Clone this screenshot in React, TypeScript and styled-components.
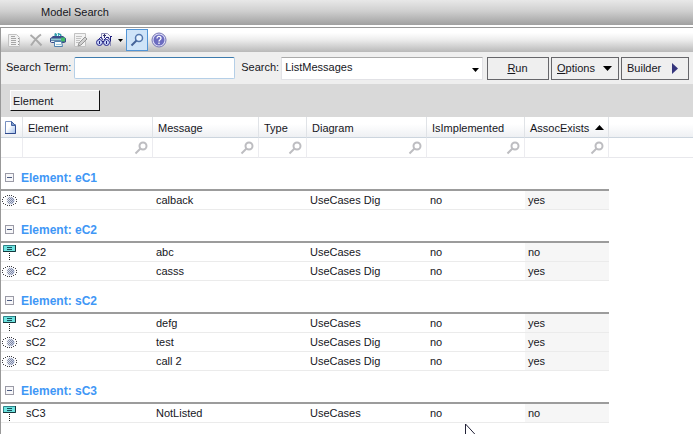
import React from "react";
import styled, { createGlobalStyle, css } from "styled-components";

const GlobalStyle = createGlobalStyle`
  *, *::before, *::after { box-sizing: border-box; }
  body { margin: 0; background: #fff; }
  button, input, select { font: inherit; color: inherit; margin: 0; border-radius: 0; }
`;

const Page = styled.div`
  position: relative;
  display: flex;
  flex-direction: column;
  min-height: 100vh;
  overflow: hidden;
  color: #16161c;
  font: 11px/16px "Liberation Sans", Arial, sans-serif;
`;

const TitleBar = styled.header`
  height: 25px;
  padding: 4px 0 0 41px;
  background: linear-gradient(#e8e8e8, #cfcfcf 45%, #a0a0a0);
`;

const Title = styled.h1`
  margin: 0;
  font: inherit;
`;

const Panel = styled.main`
  flex: 1;
  margin-top: 2px;
  border-top: 1px solid #989898;
  border-left: 1px solid #999;
`;

const Toolbar = styled.div`
  display: flex;
  align-items: center;
  height: 24px;
  padding-left: 2px;
  background: linear-gradient(#fff 20%, #ececec 50%, #b9b9b9);
`;

const ToolButton = styled.button<{ $active?: boolean; $narrow?: boolean; $spaced?: boolean }>`
  display: grid;
  place-items: center;
  width: ${(p) => (p.$narrow ? "11px" : "22px")};
  height: 22px;
  margin-left: ${(p) => (p.$spaced ? "2px" : "0")};
  padding: 0;
  border: 1px solid ${(p) => (p.$active ? "#5295d6" : "transparent")};
  background: ${(p) => (p.$active ? "#cfe4f8" : "transparent")};
`;

const SearchRow = styled.form`
  display: flex;
  align-items: center;
  height: 32px;
  padding: 0 4px 0 5px;
  background: #efefef;
`;

const FieldLabel = styled.label`
  flex: none;
  padding-bottom: 2px;
`;

const TermInput = styled.input`
  flex: none;
  width: 161px;
  height: 22px;
  margin: 0 6px 0 3px;
  padding: 0 4px;
  border: 1px solid #b5cfe7;
  border-top-color: #3d7bad;
  border-radius: 2px;
  background: #fff;
`;

const SelectWrap = styled.div`
  position: relative;
  flex: 1;
  margin: 0 4px 0 2px;
`;

const SearchSelect = styled.select`
  display: block;
  appearance: none;
  width: 100%;
  height: 23px;
  padding: 0 16px 3px 3px;
  border: 1px solid #e2e2e6;
  border-top-color: #aaa;
  background: #fff;
`;

const SelectArrow = styled.span`
  position: absolute;
  top: 7px;
  right: 4px;
  display: flex;
  pointer-events: none;
`;

const PushButton = styled.button<{ $width: number; $spread?: boolean }>`
  flex: none;
  display: flex;
  align-items: center;
  justify-content: ${(p) => (p.$spread ? "space-between" : "center")};
  width: ${(p) => p.$width}px;
  height: 23px;
  padding: 0 6px 0 5px;
  border: 1px solid #66666a;
  background: #efefef;

  & + & { margin-left: 2px; }
`;

const GroupBand = styled.div`
  display: flex;
  align-items: center;
  height: 33px;
  padding-left: 9px;
  background: #d9d9d9;
`;

const GroupChip = styled.button`
  width: 90px;
  height: 21px;
  padding: 0 0 0 2px;
  border: 1px solid #fff;
  border-right-color: #111;
  border-bottom-color: #111;
  background: #efefef;
  text-align: left;
`;

const Grid = styled.table`
  width: 100%;
  table-layout: fixed;
  border-collapse: separate;
  border-spacing: 0;
`;

const Col = styled.col<{ $width?: number }>`
  width: ${(p) => (p.$width ? `${p.$width}px` : "auto")};
`;

const HeadCell = styled.th`
  height: 21px;
  padding: 1px 0 0 5px;
  border-right: 1px solid #e0e3e7;
  border-bottom: 1px solid #ccd5de;
  background: linear-gradient(#fff 35%, #eef0f3);
  font-weight: normal;
  text-align: left;
  white-space: nowrap;

  &:first-child { padding-left: 3px; }
  &:last-child { border-right: 0; }
`;

const HeadLabel = styled.span`
  display: flex;
  align-items: center;
  gap: 6px;
`;

const FilterCell = styled.td`
  height: 20px;
  padding: 0 4px 0 0;
  border-right: 1px solid #ececf0;
  border-bottom: 1px solid #e8e8ec;

  &:last-child { border-right: 0; }
`;

const FilterButton = styled.button`
  display: flex;
  margin-left: auto;
  padding: 0;
  border: 0;
  background: none;
`;

const GroupCell = styled.th`
  height: 33px;
  padding: 8px 0 0 4px;
  border-bottom: 2px solid #9c9c9c;
  color: #3f97f6;
  font: bold 12px/16px "Liberation Sans", Arial, sans-serif;
  text-align: left;
`;

const GroupTitle = styled.span`
  display: flex;
  align-items: center;
  gap: 7px;
`;

const Toggle = styled.button`
  display: flex;
  padding: 0;
  border: 0;
  background: none;
`;

const cellBase = css`
  height: 19px;
  border-bottom: 1px solid #ebebeb;
`;

const IconCell = styled.td`
  ${cellBase}
  padding: 0 0 0 1px;
`;

const Cell = styled.td<{ $sorted?: boolean }>`
  ${cellBase}
  padding: 0 0 0 3px;
  background: ${(p) => (p.$sorted ? "#f6f6f6" : "#fff")};
  white-space: nowrap;
`;

const Blank = styled.td`
  padding: 0;
`;

const Block = styled.svg`
  display: block;
  flex: none;
`;

const Pointer = styled(Block)`
  position: absolute;
  left: 465px;
  top: 424px;
`;

const Triangle = ({ d, w, h, fill = "#000" }: { d: string; w: number; h: number; fill?: string }) => (
  <Block width={w} height={h} viewBox={`0 0 ${w} ${h}`} aria-hidden="true">
    <path d={d} fill={fill} />
  </Block>
);

const Icon = ({ children }: { children: React.ReactNode }) => (
  <Block width="16" height="16" viewBox="0 0 16 16" fill="none" aria-hidden="true">
    {children}
  </Block>
);

const ListIcon = () => (
  <Icon>
    <path d="M2.500 2.500h8l3 3v9h-11z" fill="#f1f1f1" stroke="#c2c2c2" />
    <path d="M5 4.500h4M5 6.500h5M5 8.500h5M5 10.500h5M5 12.500h5" stroke="#a6a6a6" />
    <path d="M12.500 6v1M12.500 9v1M12.500 12v1" stroke="#8f8f8f" />
  </Icon>
);

const DeleteIcon = () => (
  <Icon>
    <path d="M2.500 3c4 3 7 6 11 10.500M13 2.500C9 5 6 9 3 13.500" stroke="#aaa" strokeWidth="2" />
  </Icon>
);

const PrinterIcon = () => (
  <Icon>
    <path d="M5 5V1.500l2 1 1-1 3 1V5z" fill="#3fb6c4" stroke="#2c96a2" />
    <path d="M7.500 2v3M9.500 3v2" stroke="#e4fbff" />
    <path d="M0 6.500 3 4h10l3 2.500V10l-2 1H2l-2-1z" fill="#3c4c8a" />
    <path d="M1 6.500h11v2H1z" fill="#8fc9d0" />
    <path d="M11 5.500h4v4h-4z" fill="#42bc6a" />
    <path d="M1 9h4v1H1z" fill="#e4ecf2" />
    <path d="M4.500 9.500h7l1 5h-8z" fill="#f4fafc" stroke="#4e80ad" />
    <path d="M6 12.500h5" stroke="#9ac5dc" />
  </Icon>
);

const EditIcon = () => (
  <Icon>
    <path d="M2.500 1.500h11v13h-11z" fill="#f2f2f2" stroke="#c2c2c2" />
    <path d="M4 4.500h6M4 6.500h5M4 8.500h4M4 10.500h3" stroke="#c2c2c2" />
    <path d="m13 5-6 6-1 3 3-1 6-6z" fill="#d0d0d0" stroke="#969696" />
  </Icon>
);

const FindIcon = () => (
  <Icon>
    <path d="M5.500 7V1.500h6l3 3V14" fill="#f2f2fb" stroke="#8f8fb6" />
    <path d="M7 3.500h3M8.500 2v4M11 5.500h2" stroke="#34346e" />
    <path d="m2 8 3-3 2 3M8 8l3-3 3 2.500" stroke="#26268c" />
    <circle cx="3.500" cy="10.500" r="3" fill="#c8d4f8" stroke="#26268a" />
    <circle cx="10.500" cy="10.500" r="3" fill="#c8d4f8" stroke="#26268a" />
    <path d="M6 9.500h2M3.500 9v3M10.500 9v3" stroke="#20207e" />
    <path d="M14 4.500h2M14.500 4.500v5" stroke="#20207e" />
  </Icon>
);

const SearchToolIcon = () => (
  <Icon>
    <circle cx="10" cy="6" r="3.500" fill="#e8f4ff" stroke="#5276ac" strokeWidth="1.500" />
    <path d="m7.500 8.500-5 5" stroke="#456499" strokeWidth="2" />
  </Icon>
);

const HelpIcon = () => (
  <Icon>
    <circle cx="8" cy="8" r="7" fill="#e0e0f8" stroke="#7676b4" />
    <circle cx="8" cy="8" r="5.500" fill="#6c6cc0" />
    <path d="M6 6.500C6 3.500 10 4 10 6.300 10 8 8 7.500 8 9.500M8 10.500v1.500" stroke="#fff" strokeWidth="1.300" />
  </Icon>
);

const PageIcon = () => (
  <Block width="13" height="15" viewBox="0 0 13 15" aria-hidden="true">
    <defs>
      <linearGradient id="sheet" x1="0" y1="0" x2="1" y2="1">
        <stop offset="0.4" stopColor="#fff" />
        <stop offset="1" stopColor="#9dbbe8" />
      </linearGradient>
    </defs>
    <path d="M1.500 1.500h6l4 4v8h-10z" fill="url(#sheet)" stroke="#7890c0" />
    <path d="M11.500 4.500v9H1" fill="none" stroke="#2f4a8e" />
    <path d="M7.500 1.500v4h4z" fill="#7f9ccc" stroke="#4463a2" />
  </Block>
);

const FilterIcon = () => (
  <Block width="14" height="14" viewBox="0 0 14 14" fill="none" aria-hidden="true">
    <circle cx="9" cy="5" r="3.500" stroke="#bdbdc1" strokeWidth="2" />
    <path d="m6.500 7.500-5 5" stroke="#bdbdc1" strokeWidth="2" />
  </Block>
);

const MinusBox = () => (
  <Block width="9" height="9" viewBox="0 0 9 9" aria-hidden="true">
    <rect x=".5" y=".5" width="8" height="8" fill="#f7f7f9" stroke="#9a9aa6" />
    <path d="M2 4.500h5" stroke="#4a5a80" />
  </Block>
);

const ObjectIcon = () => (
  <Block width="15" height="17" viewBox="0 0 15 17" fill="none" aria-label="Sequence element" role="img">
    <path d="M1.500 1.500h12v6h-12z" fill="#6fe3e0" stroke="#2b8489" />
    <path d="M1 7.500h12.500V1" stroke="#16383c" />
    <path d="M5 3.500h5M5 5.500h5" stroke="#164c58" />
    <path d="M7.500 9v7" stroke="#222" strokeDasharray="1 1" />
  </Block>
);

const UseCaseIcon = () => (
  <Block width="15" height="13" viewBox="0 0 15 13" fill="none" aria-label="Use case element" role="img">
    <defs>
      <pattern id="mesh" width="2" height="2" patternUnits="userSpaceOnUse">
        <path d="M0 0h1v1H0zM1 1h1v1H1z" fill="#6d7690" />
      </pattern>
      <linearGradient id="glow">
        <stop offset="0.1" stopColor="#fff" />
        <stop offset="1" stopColor="#b4c0e0" />
      </linearGradient>
    </defs>
    <ellipse cx="7.500" cy="6.500" rx="5" ry="4" fill="url(#glow)" />
    <ellipse cx="8.500" cy="6.500" rx="3.500" ry="3.500" fill="url(#mesh)" opacity=".8" />
    <path
      d="M5 1h1v1H5zM7 1h1v1H7zM9 1h1v1H9zM3 2h1v1H3zM11 2h1v1h-1zM1 3h1v1H1zM13 3h1v1h-1zM0 5h1v1H0zM14 5h1v1h-1zM0 7h1v1H0zM14 7h1v1h-1zM1 9h1v1H1zM13 9h1v1h-1zM3 10h1v1H3zM11 10h1v1h-1zM5 11h1v1H5zM7 11h1v1H7zM9 11h1v1H9z"
      fill="#3c3c42"
    />
  </Block>
);

type Row = { kind: "object" | "usecase"; message: string; diagram: string; implemented: string; assoc: string };
type Group = { name: string; rows: Row[] };

const row = (kind: Row["kind"], message: string, assoc: string): Row => ({
  kind,
  message,
  assoc,
  implemented: "no",
  diagram: kind === "object" ? "UseCases" : "UseCases Dig",
});

const groups: Group[] = [
  { name: "eC1", rows: [row("usecase", "calback", "yes")] },
  { name: "eC2", rows: [row("object", "abc", "no"), row("usecase", "casss", "yes")] },
  { name: "sC2", rows: [row("object", "defg", "yes"), row("usecase", "test", "yes"), row("usecase", "call 2", "yes")] },
  { name: "sC3", rows: [row("object", "NotListed", "no")] },
];

const columns = [
  { label: "Element", width: 130 },
  { label: "Message", width: 106 },
  { label: "Type", width: 48 },
  { label: "Diagram", width: 120 },
  { label: "IsImplemented", width: 98 },
  { label: "AssocExists", width: 84, sorted: true },
];

export default function App() {
  return (
    <>
      <GlobalStyle />
      <Page>
        <TitleBar>
          <Title>Model Search</Title>
        </TitleBar>
        <Panel>
          <Toolbar role="toolbar" aria-label="Search tools">
            <ToolButton aria-label="Open list"><ListIcon /></ToolButton>
            <ToolButton aria-label="Delete"><DeleteIcon /></ToolButton>
            <ToolButton aria-label="Print"><PrinterIcon /></ToolButton>
            <ToolButton aria-label="Edit"><EditIcon /></ToolButton>
            <ToolButton aria-label="Find" $spaced><FindIcon /></ToolButton>
            <ToolButton aria-label="Find options" $narrow>
              <Triangle w={5} h={3} d="M0 0h5L2.500 3z" />
            </ToolButton>
            <ToolButton aria-label="Show search" aria-pressed="true" $active><SearchToolIcon /></ToolButton>
            <ToolButton aria-label="Help"><HelpIcon /></ToolButton>
          </Toolbar>
          <SearchRow onSubmit={(e) => e.preventDefault()}>
            <FieldLabel htmlFor="term">Search Term:</FieldLabel>
            <TermInput id="term" type="text" />
            <FieldLabel htmlFor="search">Search:</FieldLabel>
            <SelectWrap>
              <SearchSelect id="search" defaultValue="ListMessages">
                <option>ListMessages</option>
              </SearchSelect>
              <SelectArrow><Triangle w={7} h={8} d="M0 4h7L3.500 8z" /></SelectArrow>
            </SelectWrap>
            <PushButton type="submit" $width={62}><span><u>R</u>un</span></PushButton>
            <PushButton type="button" $width={68} $spread>
              <span><u>O</u>ptions</span>
              <Triangle w={9} h={5} d="M0 0h9L4.500 5z" />
            </PushButton>
            <PushButton type="button" $width={68} $spread>
              Builder
              <Triangle w={10} h={11} d="M0 0l6 5.500L0 11z" fill="#35357c" />
            </PushButton>
          </SearchRow>
          <GroupBand>
            <GroupChip type="button">Element</GroupChip>
          </GroupBand>
          <Grid>
            <colgroup>
              <Col $width={22} />
              {columns.map((c) => <Col key={c.label} $width={c.width} />)}
              <Col />
            </colgroup>
            <thead>
              <tr>
                <HeadCell aria-label="Kind"><PageIcon /></HeadCell>
                {columns.map((c) => (
                  <HeadCell key={c.label} scope="col" aria-sort={c.sorted ? "ascending" : undefined}>
                    <HeadLabel>
                      {c.label}
                      {c.sorted && <Triangle w={9} h={5} d="M0 5h9L4.500 0z" />}
                    </HeadLabel>
                  </HeadCell>
                ))}
                <HeadCell as="td" />
              </tr>
              <tr>
                <FilterCell />
                {columns.map((c) => (
                  <FilterCell key={c.label}>
                    <FilterButton type="button" aria-label={`Filter ${c.label}`}><FilterIcon /></FilterButton>
                  </FilterCell>
                ))}
                <FilterCell />
              </tr>
            </thead>
            {groups.map((g) => (
              <tbody key={g.name}>
                <tr>
                  <GroupCell colSpan={7} scope="rowgroup">
                    <GroupTitle>
                      <Toggle type="button" aria-label={`Collapse ${g.name}`} aria-expanded="true"><MinusBox /></Toggle>
                      Element: {g.name}
                    </GroupTitle>
                  </GroupCell>
                  <Blank />
                </tr>
                {g.rows.map((r) => (
                  <tr key={r.message}>
                    <IconCell>{r.kind === "object" ? <ObjectIcon /> : <UseCaseIcon />}</IconCell>
                    <Cell>{g.name}</Cell>
                    <Cell>{r.message}</Cell>
                    <Cell />
                    <Cell>{r.diagram}</Cell>
                    <Cell>{r.implemented}</Cell>
                    <Cell $sorted>{r.assoc}</Cell>
                    <Blank />
                  </tr>
                ))}
              </tbody>
            ))}
          </Grid>
        </Panel>
        <Pointer width="12" height="10" viewBox="0 0 12 10" aria-hidden="true">
          <path d="M.500 0v17l4-4h8z" fill="#fff" stroke="#222238" />
        </Pointer>
      </Page>
    </>
  );
}
